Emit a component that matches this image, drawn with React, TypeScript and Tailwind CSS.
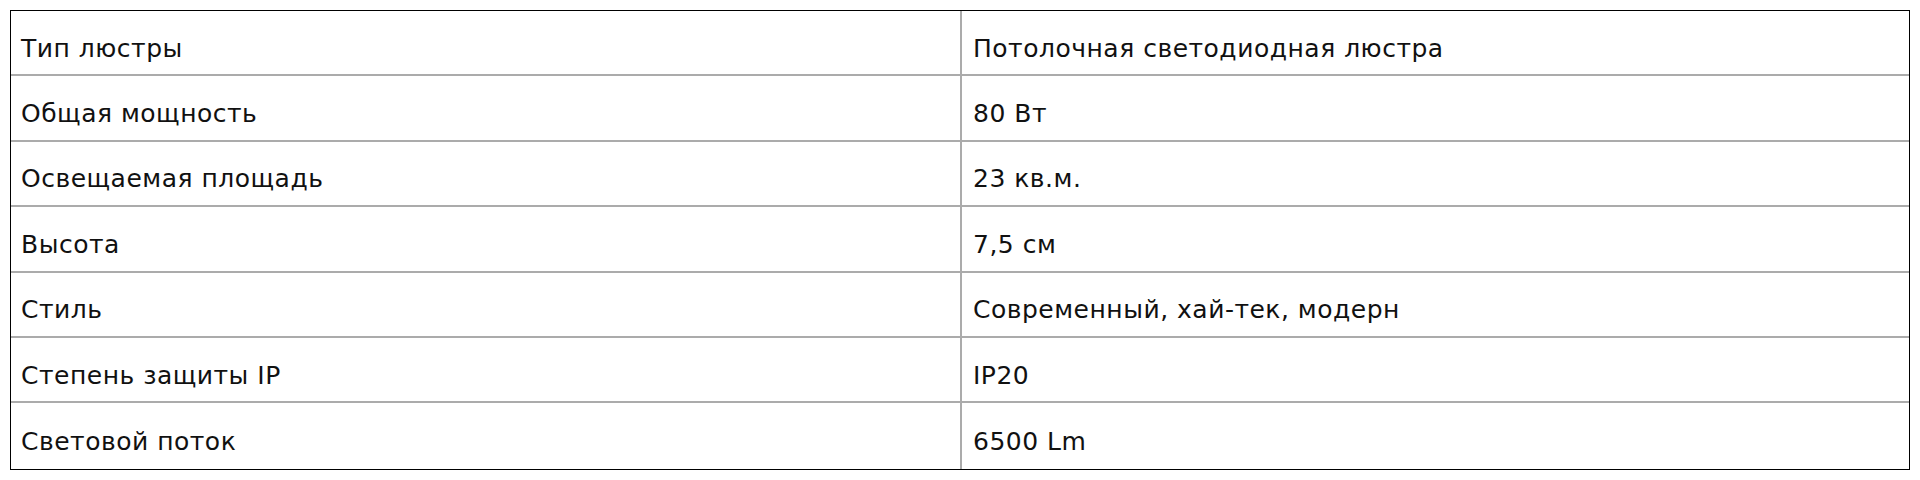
const ROWS = [
	{ label: "Тип люстры", value: "Потолочная светодиодная люстра" },
	{ label: "Общая мощность", value: "80 Вт" },
	{ label: "Освещаемая площадь", value: "23 кв.м." },
	{ label: "Высота", value: "7,5 см" },
	{ label: "Стиль", value: "Современный, хай-тек, модерн" },
	{ label: "Степень защиты IP", value: "IP20" },
	{ label: "Световой поток", value: "6500 Lm" },
];

export default function App() {
	return (
		<div className="w-[1920px] h-[480px] bg-white p-[10px] font-['DejaVu_Sans',sans-serif] text-[#111]">
			<div className="border border-black">
				{ROWS.map((row, i) => (
					<div
						key={row.label}
						className={`flex h-[65.4px] ${i < ROWS.length - 1 ? "border-b-2 border-[#ababab]" : ""}`}
					>
						<div className="w-1/2 flex items-center pl-[10px] pt-[11px] text-[25px] tracking-[0.5px] leading-none">
							{row.label}
						</div>
						<div className="w-1/2 flex items-center pl-[11px] pt-[11px] text-[25px] tracking-[0.5px] leading-none border-l-2 border-[#ababab]">
							{row.value}
						</div>
					</div>
				))}
			</div>
		</div>
	);
}
